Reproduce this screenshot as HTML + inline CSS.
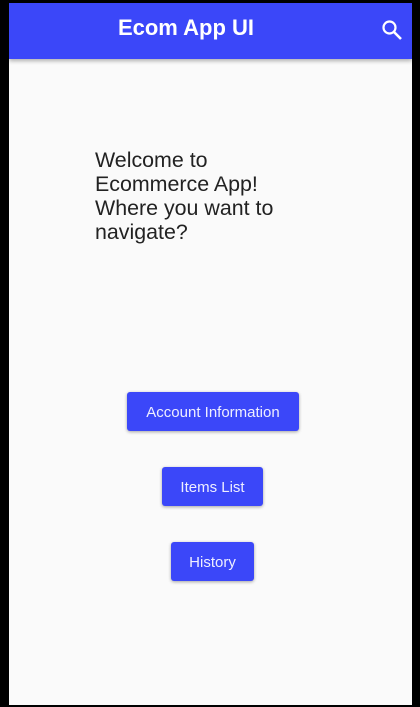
<!DOCTYPE html>
<html><head><style>
body{margin:0;width:420px;height:707px;background:#000;position:relative;overflow:hidden;font-family:"Liberation Sans",sans-serif}
#s{position:absolute;left:9px;top:3px;width:403px;height:702px;background:#fafafa}
#bar{position:absolute;left:0;top:0;width:403px;height:56px;background:#3b47f9;box-shadow:0 2px 4px rgba(0,0,0,.3)}
#t{position:absolute;left:0;width:354px;text-align:center;top:12px;color:#fff;font-weight:bold;font-size:22px}
#w{position:absolute;left:86px;top:145px;font-size:21.4px;line-height:24px;color:#222}
.b{position:absolute;height:39px;background:#3b47f9;color:#eef;border-radius:3px;font-size:15px;line-height:41px;text-align:center;box-shadow:0 1px 3px rgba(0,0,0,.35)}
</style></head><body><div id="s">
<div id="bar"><div id="t">Ecom App UI</div>
<svg style="position:absolute;left:372px;top:16px" width="22" height="22" viewBox="0 0 22 22"><circle cx="8.5" cy="8.5" r="6" fill="none" stroke="#fff" stroke-width="2.2"/><path d="M13 13l7 7" stroke="#fff" stroke-width="2.6"/></svg></div>
<div id="w">Welcome to<br>Ecommerce App!<br>Where you want to<br>navigate?</div>
<div class="b" style="left:118px;top:389px;width:172px">Account Information</div>
<div class="b" style="left:153px;top:464px;width:101px">Items List</div>
<div class="b" style="left:162px;top:539px;width:83px">History</div>
</div></body></html>
